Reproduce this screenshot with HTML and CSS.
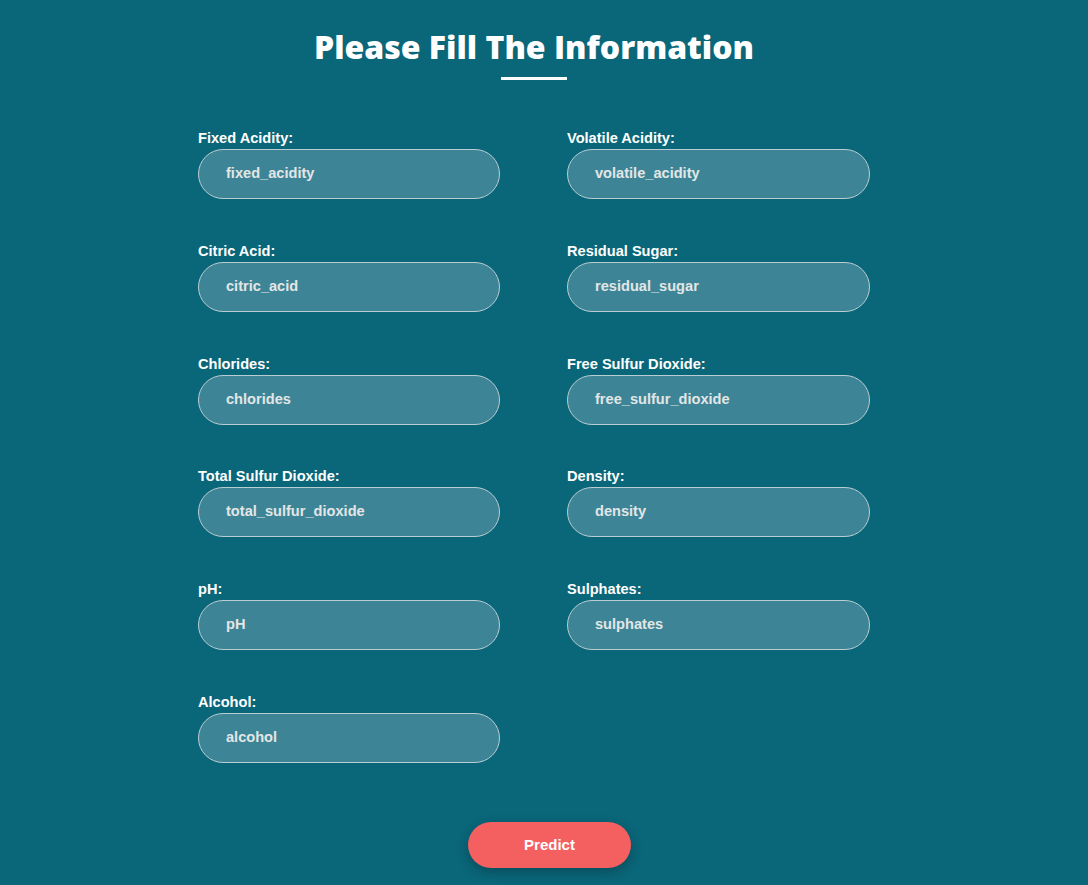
FILE: index.html
```html
<!DOCTYPE html>
<html>
<head>
<meta charset="utf-8">
<link rel="stylesheet" href="styles.css">
</head>
<body>
<div class="page">
  <h1 class="title">Please Fill The Information</h1>
  <div class="underline"></div>
  <form class="form">
    <div class="grid">
      <div class="field"><label>Fixed Acidity:</label><input placeholder="fixed_acidity"></div>
      <div class="field"><label>Volatile Acidity:</label><input placeholder="volatile_acidity"></div>
      <div class="field"><label>Citric Acid:</label><input placeholder="citric_acid"></div>
      <div class="field"><label>Residual Sugar:</label><input placeholder="residual_sugar"></div>
      <div class="field"><label>Chlorides:</label><input placeholder="chlorides"></div>
      <div class="field"><label>Free Sulfur Dioxide:</label><input placeholder="free_sulfur_dioxide"></div>
      <div class="field"><label>Total Sulfur Dioxide:</label><input placeholder="total_sulfur_dioxide"></div>
      <div class="field"><label>Density:</label><input placeholder="density"></div>
      <div class="field"><label>pH:</label><input placeholder="pH"></div>
      <div class="field"><label>Sulphates:</label><input placeholder="sulphates"></div>
      <div class="field"><label>Alcohol:</label><input placeholder="alcohol"></div>
    </div>
    <div class="actions"><button type="button" class="predict">Predict</button></div>
  </form>
</div>
</body>
</html>
```
FILE: styles.css
```css
html, body {
  margin: 0;
  padding: 0;
  background: #0a6679;
  height: 100%;
}
body {
  font-family: "Liberation Sans", Arial, sans-serif;
  color: #fff;
  overflow: hidden;
}
.page {
  width: 1068px;
  padding-top: 25px;
  display: flex;
  flex-direction: column;
  align-items: center;
}
.title {
  margin: 0;
  font-family: "Open Sans", sans-serif;
  font-weight: 800;
  font-size: 32px;
  line-height: 44px;
  color: #fff;
}
.underline {
  width: 66px;
  height: 3px;
  background: #fff;
  margin-top: 8px;
}
.form {
  margin-top: 50px;
  display: flex;
  flex-direction: column;
  align-items: center;
}
.grid {
  display: grid;
  grid-template-columns: 302px 303px;
  column-gap: 67px;
  row-gap: 43.8px;
}
.field {
  display: flex;
  flex-direction: column;
}
.field label {
  font-size: 14.6px;
  font-weight: 700;
  line-height: 16px;
  margin-bottom: 3px;
  color: #fff;
}
.field input {
  box-sizing: border-box;
  width: 100%;
  height: 50px;
  border-radius: 25px;
  border: 1px solid #b9cdd2;
  background: #3d8596;
  padding: 0 0 2px 27px;
  font-family: "Liberation Sans", Arial, sans-serif;
  font-size: 14.6px;
  font-weight: 700;
  color: #e8e8e8;
  outline: none;
}
.field input::placeholder {
  color: #e3e6e6;
  opacity: 1;
}
.actions {
  margin-top: 59px;
  margin-left: 31px;
}
.predict {
  width: 163px;
  height: 46px;
  border: none;
  border-radius: 23px;
  background: #f45f5f;
  color: #fff;
  font-family: "Liberation Sans", Arial, sans-serif;
  font-size: 15px;
  font-weight: 700;
  box-shadow: 0 4px 12px rgba(0, 0, 0, 0.25);
  cursor: pointer;
}
```
